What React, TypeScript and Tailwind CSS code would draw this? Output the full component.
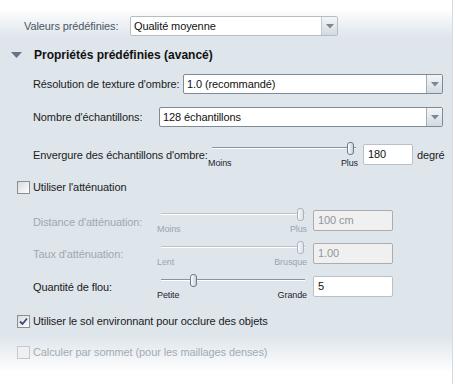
import React from "react";

function Dropdown({ value, width, light }: { value: string; width?: string; light?: boolean }) {
  return (
    <div
      className={`flex h-[20px] ${width ?? "flex-1"} rounded-[2px] border bg-white ${
        light ? "border-[#b4bcc4]" : "border-[#7f8a94]"
      }`}
    >
      <div className="flex-1 pl-[3px] leading-[18px] text-[#111]">{value}</div>
      <div
        className={`flex w-[16px] items-center justify-center border-l bg-[linear-gradient(to_bottom,#f3f6f8,#d2dae1)] ${
          light ? "border-[#c3cad0]" : "border-[#a3adb6]"
        }`}
      >
        <svg width="8" height="5" viewBox="0 0 8 5">
          <polygon points="0,0 8,0 4,4.5" fill="#7b8893" />
        </svg>
      </div>
    </div>
  );
}

function Slider({
  pos,
  left,
  right,
  disabled,
}: {
  pos: number;
  left: string;
  right: string;
  disabled?: boolean;
}) {
  return (
    <div className="relative h-[26px] w-[150px] shrink-0">
      <div
        className={`ml-[4px] mr-[2px] mt-[5px] h-[2px] border-t ${
          disabled ? "border-[#bac3cb]" : "border-[#8594a0]"
        } bg-white`}
      />
      <div
        className={`absolute top-0 h-[13px] w-[7px] rounded-[3px] border ${
          disabled
            ? "border-[#aab4bd] bg-[linear-gradient(to_right,#f6f8fa,#dbe1e6)]"
            : "border-[#6c7c8a] bg-[linear-gradient(to_right,#ffffff,#c4ced7)]"
        }`}
        style={{ left: pos }}
      />
      <div
        className={`mt-[9px] flex justify-between text-[9px] leading-[10px] ${
          disabled ? "text-[#9ba5ae]" : "text-[#1c2630]"
        }`}
      >
        <span>{left}</span>
        <span>{right}</span>
      </div>
    </div>
  );
}

function Field({ value, width, disabled }: { value: string; width: string; disabled?: boolean }) {
  return (
    <div
      className={`mt-[2px] h-[21px] ${width} rounded-[2px] border pl-[4px] leading-[19px] ${
        disabled
          ? "border-[#a9adb1] bg-[#f0f0f0] text-[#8e969d]"
          : "border-[#b9c1c8] bg-white text-[#111]"
      }`}
    >
      {value}
    </div>
  );
}

function Check({ checked, disabled }: { checked?: boolean; disabled?: boolean }) {
  return (
    <span
      className={`flex h-[13px] w-[13px] items-center justify-center border ${
        disabled
          ? "border-[#c4c8cc] bg-[#eef0f2]"
          : "border-[#8a8f94] bg-[linear-gradient(135deg,#d8dadc,#ffffff)]"
      }`}
    >
      {checked && (
        <svg width="9" height="9" viewBox="0 0 9 9">
          <path d="M1 4.5 L3.5 7 L8 1.5" stroke="#34498c" strokeWidth="1.8" fill="none" />
        </svg>
      )}
    </span>
  );
}

export default function App() {
  return (
    <div className="flex h-[384px] w-[455px] bg-white font-['Liberation_Sans',Arial,sans-serif] text-[11px] tracking-[-0.1px] text-[#1b1b1b]">
      <div className="h-[384px] w-[453px] border-r border-[#d4dae0] bg-[linear-gradient(to_bottom,#ffffff_0px,#ffffff_8px,#dee5eb_38px,#dee5eb_336px,#ffffff_372px)] pt-[16px]">
        {/* Preset values */}
        <div className="flex h-[20px] items-center">
          <span className="w-[130px] shrink-0 pl-[24px] text-[#4a5665]">Valeurs prédéfinies:</span>
          <Dropdown value="Qualité moyenne" width="w-[208px]" light />
        </div>

        {/* Section header */}
        <div className="mt-[9px] flex h-[20px] items-center">
          <svg className="ml-[11px]" width="11" height="6" viewBox="0 0 11 6">
            <polygon points="0,0 11,0 5.5,6" fill="#64748a" />
          </svg>
          <span className="ml-[12px] text-[12px] font-bold tracking-normal text-[#111]">
            Propriétés prédéfinies (avancé)
          </span>
        </div>

        <div className="mt-[9px] flex h-[20px] items-center pr-[9px]">
          <span className="w-[183px] shrink-0 pl-[33px] whitespace-nowrap">Résolution de texture d'ombre:</span>
          <Dropdown value="1.0 (recommandé)" />
        </div>

        <div className="mt-[13px] flex h-[20px] items-center pr-[9px]">
          <span className="w-[159px] shrink-0 pl-[33px] whitespace-nowrap">Nombre d'échantillons:</span>
          <Dropdown value="128 échantillons" />
        </div>

        {/* Shadow sample spread */}
        <div className="mt-[15px] flex h-[26px] items-start">
          <span className="mt-[6px] w-[208px] shrink-0 pl-[33px] leading-[14px] whitespace-nowrap">
            Envergure des échantillons d'ombre:
          </span>
          <Slider pos={139} left="Moins" right="Plus" />
          <div className="ml-[5px]">
            <Field value="180" width="w-[50px]" />
          </div>
          <span className="ml-[4px] mt-[6px] leading-[14px]">degré</span>
        </div>

        <div className="mt-[13px] flex h-[13px] items-center pl-[17px]">
          <Check />
          <span className="ml-[3px]">Utiliser l'atténuation</span>
        </div>

        <div className="mt-[14px] flex h-[26px] items-start text-[#a0a8b0]">
          <span className="mt-[7px] w-[157px] shrink-0 pl-[33px] leading-[14px] whitespace-nowrap">
            Distance d'atténuation:
          </span>
          <Slider pos={140} left="Moins" right="Plus" disabled />
          <div className="ml-[6px]">
            <Field value="100 cm" width="w-[80px]" disabled />
          </div>
        </div>

        <div className="mt-[7px] flex h-[26px] items-start text-[#a0a8b0]">
          <span className="mt-[6px] w-[157px] shrink-0 pl-[33px] leading-[14px] whitespace-nowrap">
            Taux d'atténuation:
          </span>
          <Slider pos={140} left="Lent" right="Brusque" disabled />
          <div className="ml-[6px]">
            <Field value="1.00" width="w-[80px]" disabled />
          </div>
        </div>

        <div className="mt-[7px] flex h-[26px] items-start">
          <span className="mt-[6px] w-[157px] shrink-0 pl-[33px] leading-[14px] whitespace-nowrap">
            Quantité de flou:
          </span>
          <Slider pos={33} left="Petite" right="Grande" />
          <div className="ml-[6px]">
            <Field value="5" width="w-[80px]" />
          </div>
        </div>

        <div className="mt-[15px] flex h-[13px] items-center pl-[17px]">
          <Check checked />
          <span className="ml-[3px]">Utiliser le sol environnant pour occlure des objets</span>
        </div>

        <div className="mt-[18px] flex h-[13px] items-center pl-[17px]">
          <Check disabled />
          <span className="ml-[3px] text-[#a4abb2]">Calculer par sommet (pour les maillages denses)</span>
        </div>
      </div>
    </div>
  );
}
